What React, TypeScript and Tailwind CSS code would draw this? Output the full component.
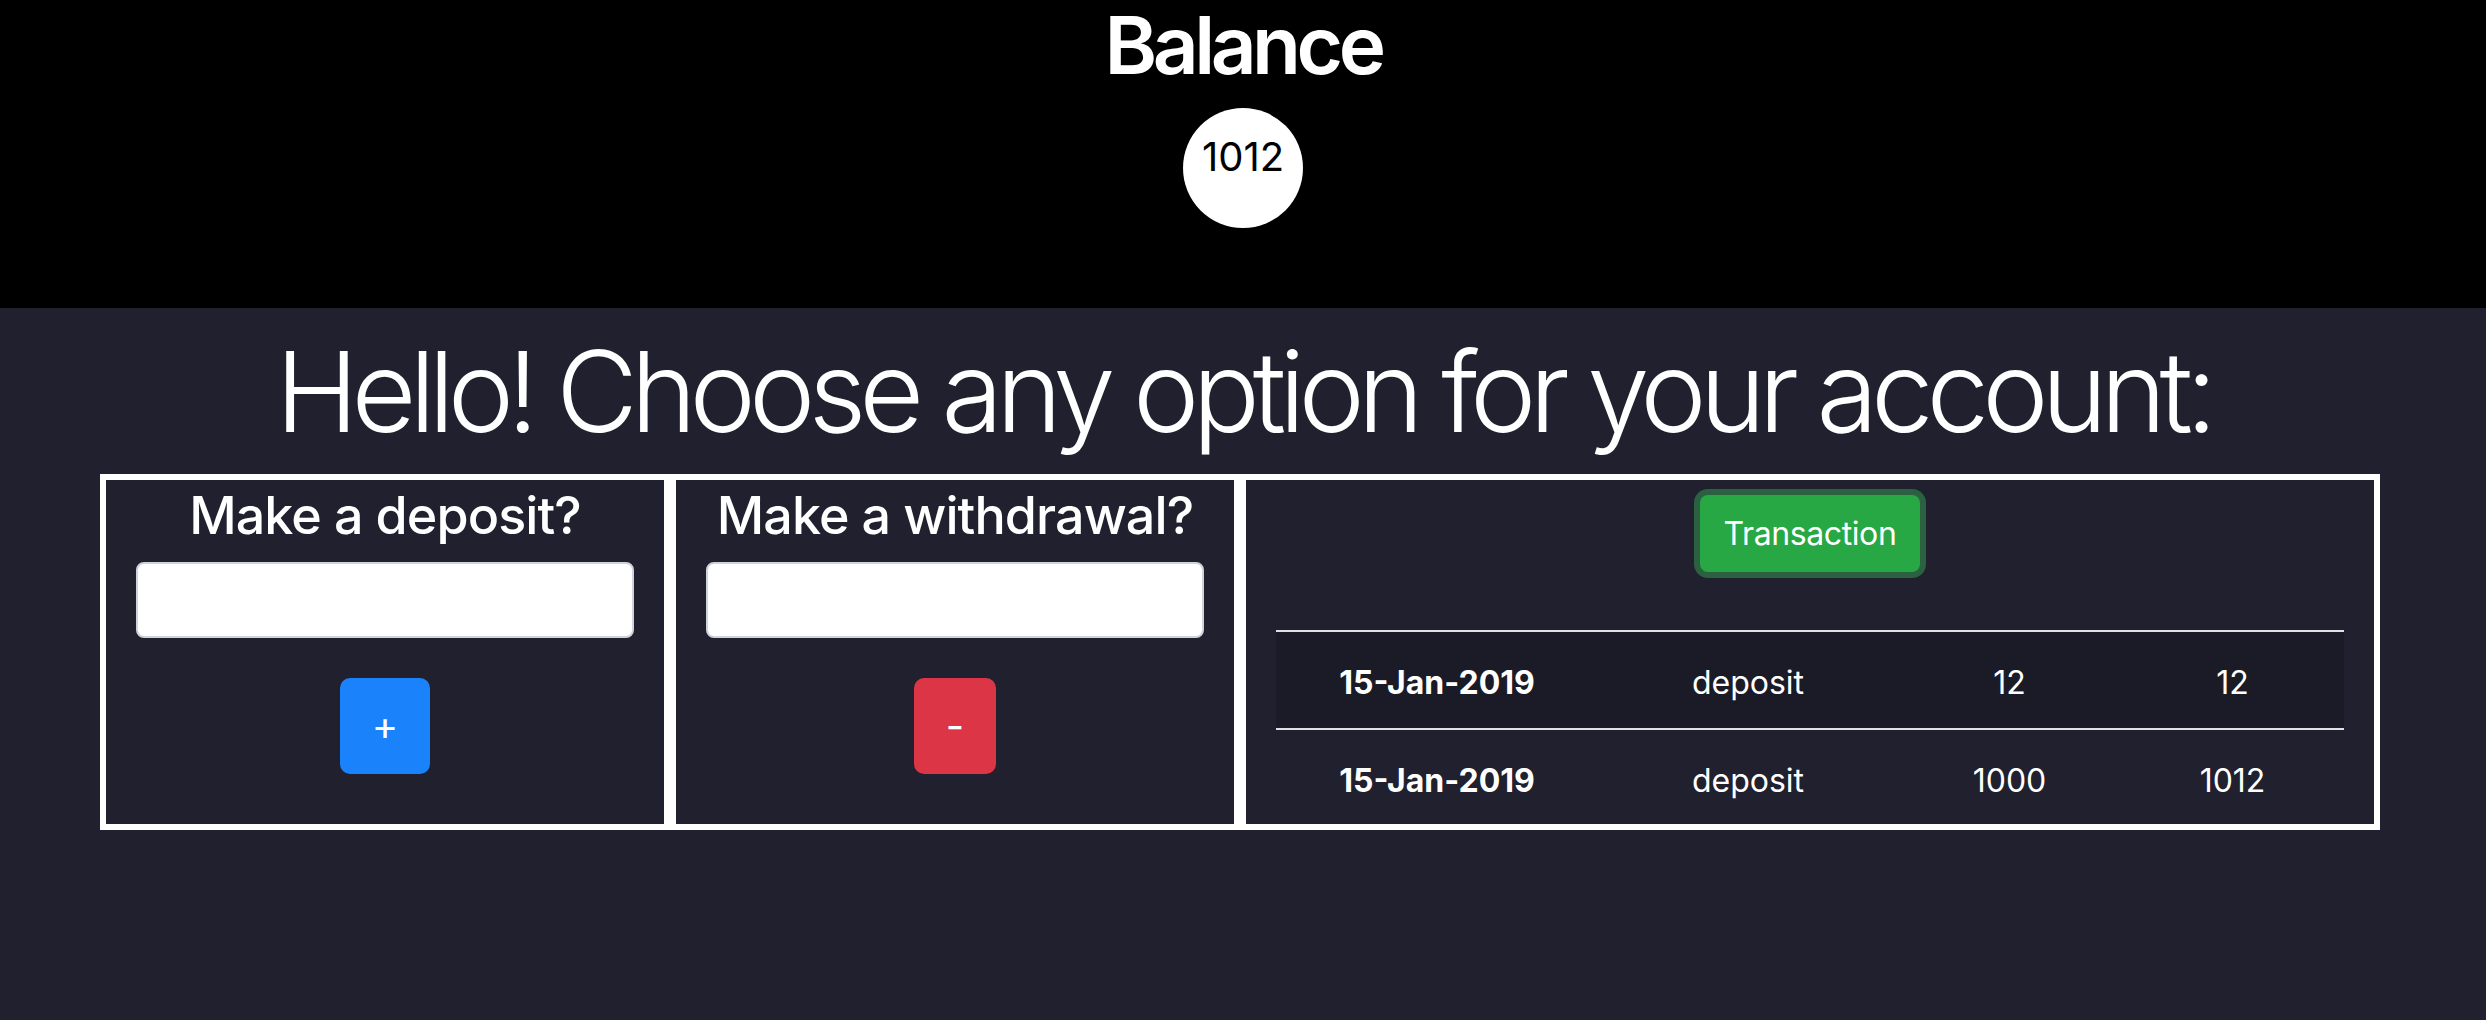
import React from 'react'

const rows = [
  { date: '15-Jan-2019', type: 'deposit', amount: 12, balance: 12 },
  { date: '15-Jan-2019', type: 'deposit', amount: 1000, balance: 1012 },
]

function ActionCell({ title, label, color }: { title: string; label: string; color: string }) {
  return (
    <div className="w-[570px] border-[6px] border-white flex flex-col items-center px-[30px] pt-[5px]">
      <h3 className="text-[52px] leading-[62px] font-medium tracking-[-0.9px]">{title}</h3>
      <input type="text" className="mt-[15px] w-full h-[76px] rounded-[8px] border-2 border-[#ced4da] bg-white" />
      <button className={`mt-[40px] h-[96px] px-[32px] rounded-[10px] text-[40px] leading-[60px] text-white ${color}`}>
        {label}
      </button>
    </div>
  )
}

export default function App() {
  return (
    <div className="min-h-[1020px] bg-[#20202e] text-white font-['Inter',sans-serif]">
      <header className="h-[308px] bg-black flex flex-col items-center">
        <h1 className="mt-[5px] text-[80px] leading-[80px] font-semibold tracking-[-4.5px]">Balance</h1>
        <div className="mt-[23px] w-[120px] h-[120px] rounded-full bg-white text-black flex justify-center pt-[19px]">
          <span className="text-[40px] leading-[60px]">1012</span>
        </div>
      </header>

      <main className="pt-[16px]">
        <h2 className="text-center text-[112px] leading-[134px] font-light tracking-[-7px]">
          Hello! Choose any option for your account:
        </h2>

        <div className="mt-[16px] ml-[100px] w-[2280px] flex">
          <ActionCell title="Make a deposit?" label="+" color="bg-[#1a82fb]" />
          <ActionCell title="Make a withdrawal?" label="-" color="bg-[#dc3545]" />

          <div className="w-[1140px] border-[6px] border-white flex flex-col items-center px-[30px] pt-[15px]">
            <button className="w-[220px] h-[77px] rounded-[8px] bg-[#28a745] text-[32px] tracking-[-0.4px] text-white shadow-[0_0_0_6px_#2b6140]">
              Transaction
            </button>
            <table className="mt-[58px] w-full table-fixed text-[32px] leading-[48px] text-center">
              <colgroup>
                <col className="w-[322px]" />
                <col className="w-[300px]" />
                <col className="w-[223px]" />
                <col className="w-[223px]" />
              </colgroup>
              <tbody>
                {rows.map((r, i) => {
                  const pad = i === 0 ? 'pt-[27px] pb-[21px]' : 'pt-[27px] pb-[19px]'
                  return (
                    <tr key={i} className={`border-t-2 border-[#dee2e6] ${i % 2 === 0 ? 'bg-[#1b1b27]' : ''}`}>
                      <td className={`font-bold ${pad}`}>{r.date}</td>
                      <td className={pad}>{r.type}</td>
                      <td className={pad}>{r.amount}</td>
                      <td className={pad}>{r.balance}</td>
                    </tr>
                  )
                })}
              </tbody>
            </table>
          </div>
        </div>
      </main>
    </div>
  )
}
